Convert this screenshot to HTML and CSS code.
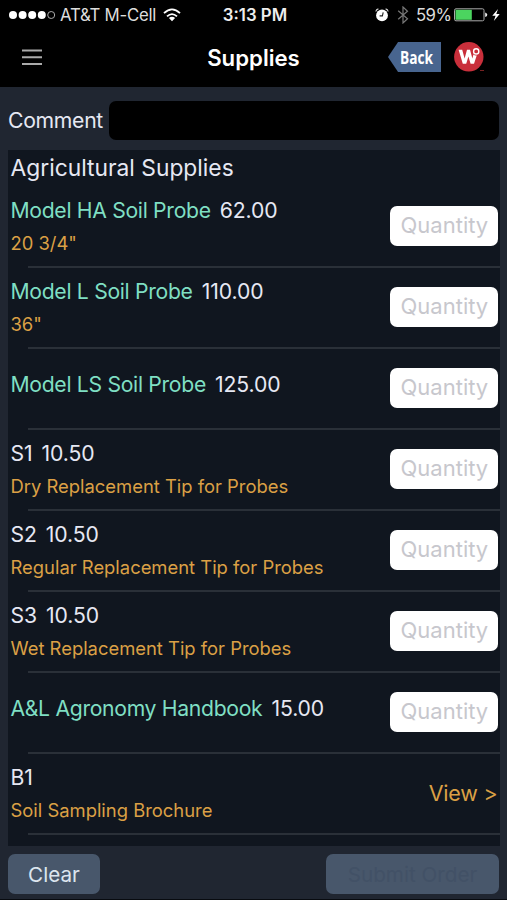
FILE: index.html
```html
<!DOCTYPE html>
<html lang="en">
<head>
<meta charset="utf-8">
<title>Supplies</title>
<link rel="stylesheet" href="styles.css">
</head>
<body>
<div class="screen">
  <header class="top">
    <div class="status">
      <div class="carrier">
        <svg class="signal" width="48" height="10" viewBox="0 0 48 10"><g fill="#fff"><circle cx="5" cy="5" r="4"/><circle cx="14.6" cy="5" r="4"/><circle cx="24.2" cy="5" r="4"/><circle cx="33.8" cy="5" r="4"/></g><circle cx="43.2" cy="5" r="3.5" fill="none" stroke="#aaa"/></svg>
        <span class="carrier-name">AT&amp;T M-Cell</span>
        <svg class="wifi" width="18" height="14" viewBox="0 0 18 14"><g fill="none" stroke="#fff" stroke-width="1.8"><path d="M1 5.2Q9-2.4 17 5.2"/><path d="M4 8.4Q9 3.8 14 8.4"/></g><path d="M5.9 10Q9 7.6 12.1 10L9 13.2Z" fill="#fff"/></svg>
      </div>
      <div class="time">3:13 PM</div>
      <div class="power">
        <svg class="alarm" width="14" height="14" viewBox="0 0 14 14"><circle cx="7" cy="7.4" r="5.9" fill="#fff"/><path d="M.8 3.5Q1.2 1.4 3.4.9M10.6.9Q12.8 1.4 13.2 3.5" fill="none" stroke="#ccc" stroke-width="1.2"/><path d="M8.2 4.3L7.4 7.9H4.6" fill="none" stroke="#222" stroke-width="1.1"/></svg>
        <svg class="bluetooth" width="12" height="18" viewBox="0 0 12 18"><path d="M1.2 4.8L10.5 12.8L6 17V1L10.5 5.2L1.2 13.2" fill="none" stroke="#777" stroke-width="1.2"/></svg>
        <span class="percent">59%</span>
        <svg class="battery" width="34" height="14" viewBox="0 0 34 14"><rect x=".5" y=".8" width="29.5" height="12" rx="1.5" fill="none" stroke="#aaa"/><rect x="1.5" y="1.8" width="16.3" height="10" fill="#4bd45f"/><path d="M31.2 4.5Q33.3 5.2 33.3 6.8T31.2 9.1Z" fill="#eee"/></svg>
        <svg class="bolt" width="8" height="12" viewBox="0 0 8 12"><path d="M6 0L.3 6.7H3.6L1.8 12L7.7 4.9H4.3Z" fill="#fff"/></svg>
      </div>
    </div>
    <nav class="nav">
      <svg class="menu" width="20" height="17" viewBox="0 0 20 17"><path d="M0 1.5H20M0 8.3H20M0 15H20" stroke="#aaa" stroke-width="1.9"/></svg>
      <h1 class="title">Supplies</h1>
      <div class="actions">
        <div class="back"><span class="back-label">Back</span></div>
        <svg class="logo" width="31" height="30" viewBox="0 0 31 30"><circle cx="14.8" cy="14.8" r="14.7" fill="#c92f3b"/><path d="M4.6 7.8H8.2L10.6 16.4L13 7.8H16L18.4 16.4L19.4 12.4Q21.2 14 22.8 13.2L20 21.8H16.6L14.4 14.4L12.2 21.8H8.8Z" fill="#fff"/><circle cx="22.2" cy="9.4" r="2.6" fill="none" stroke="#fff" stroke-width="1.4"/><path d="M26 28.5H30" stroke="#722" stroke-width="1"/></svg>
      </div>
    </nav>
  </header>
  <main class="main">
    <label class="comment"><span class="comment-label">Comment</span><input class="comment-field" type="text"></label>
    <section class="list">
      <h2 class="group">Agricultural Supplies</h2>
      <div class="row"><div class="info"><p class="item"><span class="name link">Model HA Soil Probe</span><span class="price">62.00</span></p><p class="detail">20 3/4"</p></div><input class="quantity" placeholder="Quantity"></div>
      <div class="row"><div class="info"><p class="item"><span class="name link">Model L Soil Probe</span><span class="price">110.00</span></p><p class="detail">36"</p></div><input class="quantity" placeholder="Quantity"></div>
      <div class="row"><div class="info single"><p class="item"><span class="name link">Model LS Soil Probe</span><span class="price">125.00</span></p></div><input class="quantity" placeholder="Quantity"></div>
      <div class="row"><div class="info"><p class="item"><span class="name">S1</span><span class="price">10.50</span></p><p class="detail">Dry Replacement Tip for Probes</p></div><input class="quantity" placeholder="Quantity"></div>
      <div class="row"><div class="info"><p class="item"><span class="name">S2</span><span class="price">10.50</span></p><p class="detail">Regular Replacement Tip for Probes</p></div><input class="quantity" placeholder="Quantity"></div>
      <div class="row"><div class="info"><p class="item"><span class="name">S3</span><span class="price">10.50</span></p><p class="detail">Wet Replacement Tip for Probes</p></div><input class="quantity" placeholder="Quantity"></div>
      <div class="row"><div class="info single"><p class="item"><span class="name link">A&amp;L Agronomy Handbook</span><span class="price">15.00</span></p></div><input class="quantity" placeholder="Quantity"></div>
      <div class="row"><div class="info"><p class="item"><span class="name">B1</span></p><p class="detail">Soil Sampling Brochure</p></div><span class="view">View &gt;</span></div>
    </section>
    <footer class="footer">
      <button class="button clear">Clear</button>
      <button class="button submit" disabled>Submit Order</button>
    </footer>
  </main>
</div>
</body>
</html>
```
FILE: styles.css
```css
* { box-sizing: border-box; }
body { margin: 0; background: #000; font-family: Inter, "Liberation Sans", sans-serif; color: #e6e8f3; }
h1, h2, p { margin: 0; font-weight: 400; }
input, button { font-family: inherit; margin: 0; border: 0; outline: 0; }
svg { display: block; flex: none; }
.screen { width: 507px; height: 900px; display: flex; flex-direction: column; overflow: hidden; white-space: nowrap; }
.top { height: 87px; flex: none; background: #000; }
.status { height: 30px; display: grid; grid-template-columns: 1fr auto 1fr; align-items: center; padding: 0 7px 0 8px; font-size: 16.8px; line-height: 30px; color: #ddd; }
.carrier, .power { display: flex; align-items: center; }
.carrier-name { margin-left: 4px; width: 95px; letter-spacing: -.25px; }
.wifi { margin-left: 8px; }
.time { font-weight: 600; color: #eee; padding-left: 2px; }
.power { justify-content: flex-end; }
.alarm { margin-bottom: 1px; }
.bluetooth { margin-left: 8px; }
.percent { margin-left: 7px; width: 34px; letter-spacing: -.6px; }
.battery { margin-left: 4px; }
.bolt { margin-left: 4px; }
.nav { height: 57px; display: grid; grid-template-columns: 1fr auto 1fr; align-items: center; padding: 0 22px; }
.title { font-size: 22.2px; font-weight: 600; color: #fff; line-height: 54px; margin-top: -2px; }
.actions { display: flex; justify-content: flex-end; align-items: center; gap: 13px; margin-top: -3px; }
.menu { margin-top: -3px; }
.back { width: 53px; height: 30px; background: #48658f; clip-path: polygon(0 50%, 19% 0, 100% 0, 100% 100%, 19% 100%); display: flex; align-items: center; padding-left: 12px; }
.back-label { font: 700 18.5px/30px "Open Sans", sans-serif; color: #fff; transform: scaleX(.74); transform-origin: 0 50%; }
.main { flex: 1; background: #202631; padding: 14px 8px 0; border-bottom: 1px solid #080b10; }
.comment { height: 39px; display: flex; align-items: center; }
.comment-label { width: 101px; font-size: 21.2px; line-height: 39px; letter-spacing: -.3px; }
.comment-field { flex: 1; height: 39px; border-radius: 7px; background: #000; color: #fff; font-size: 21px; }
.list { margin-top: 10px; width: 492px; height: 696px; background: #10161f; }
.group { height: 38px; padding-left: 2.5px; font-size: 22.8px; line-height: 36px; }
.row { height: 81px; padding: 0 2.5px; display: flex; justify-content: space-between; align-items: center; background: linear-gradient(#2a3038, #2a3038) 20px calc(100% - 1px) / 100% 2px no-repeat; }
.info { margin-top: -6px; }
.item { font-size: 21.2px; line-height: 30px; display: flex; gap: 9px; letter-spacing: -.1px; }
.link { color: #7fdfc3; letter-spacing: -.32px; }
.detail { margin-top: 5px; color: #dba045; font-size: 18.4px; line-height: 26px; }
.single { margin-top: -13px; }
.quantity { width: 108px; height: 40px; margin-top: -6px; padding: 0 0 2px 11px; border-radius: 7px; background: #fff; color: #222; font-size: 22px; }
.quantity::placeholder { color: #c7c7cd; opacity: 1; }
.view { color: #dba045; font-size: 21.5px; letter-spacing: -.2px; margin-top: -5px; }
.footer { display: flex; justify-content: space-between; margin-top: 8px; }
.button { height: 40px; border-radius: 7px; background: #48576b; font-size: 20.7px; padding: 0; }
.clear { width: 92px; color: #dce5ef; }
.submit { width: 173px; color: #425166; }
```
